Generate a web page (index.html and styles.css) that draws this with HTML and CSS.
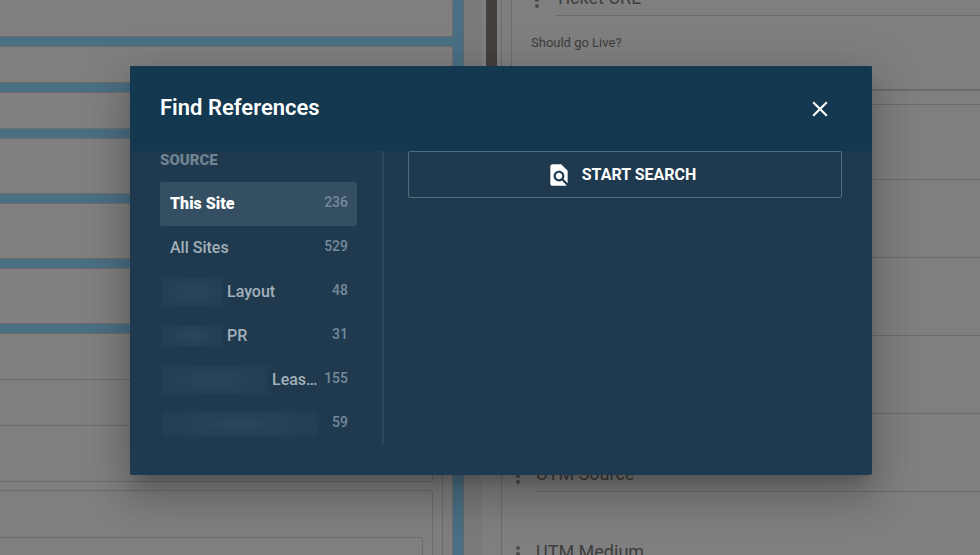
FILE: index.html
```html
<!DOCTYPE html>
<html lang="en">
<head>
<meta charset="utf-8">
<title>Find References</title>
<link rel="stylesheet" href="styles.css">
</head>
<body>
<main class="page">
  <section class="outline">
    <div class="card short"></div>
    <div class="card short"></div>
    <div class="card short"></div>
    <div class="card tall"></div>
    <div class="card tall"></div>
    <div class="card tall"></div>
    <div class="card group">
      <div class="line"></div>
      <div class="line"></div>
      <div class="nest">
        <div class="box box-end"></div>
        <div class="box box-start"><div class="box inner"></div></div>
      </div>
    </div>
  </section>
  <div class="gutter"></div>
  <div class="scrollbar"></div>
  <section class="form">
    <div class="group-top">
      <div class="panel">
        <div class="field-head"><span class="dots"><i></i><i></i><i></i></span><span class="field-name">Ticket URL</span></div>
        <p class="question">Should go Live?</p>
      </div>
    </div>
    <div class="fields">
      <div class="field first"></div>
      <div class="field"></div>
      <div class="field"></div>
      <div class="field"></div>
      <div class="field-row"><span class="dots"><i></i><i></i><i></i></span><span class="field-name">UTM Source</span></div>
      <div class="field-row"><span class="dots"><i></i><i></i><i></i></span><span class="field-name">UTM Medium</span></div>
    </div>
  </section>
</main>
<div class="overlay">
  <div class="dialog" role="dialog" aria-labelledby="dialog-title">
    <header class="dialog-head">
      <h1 id="dialog-title">Find References</h1>
      <button class="close" aria-label="Close"><svg width="26" height="26" viewBox="0 0 24 24"><path fill="#fff" d="M19 6.41 17.59 5 12 10.59 6.41 5 5 6.41 10.59 12 5 17.59 6.41 19 12 13.41 17.59 19 19 17.59 13.41 12z"/></svg></button>
    </header>
    <div class="dialog-body">
      <nav class="sources">
        <h2>SOURCE</h2>
        <button class="source active"><span class="name">This Site</span><span class="count">236</span></button>
        <button class="source"><span class="name">All Sites</span><span class="count">529</span></button>
        <button class="source masked"><span class="mask mask-a"></span><span class="name">Layout</span><span class="count">48</span></button>
        <button class="source masked"><span class="mask mask-b"></span><span class="name">PR</span><span class="count">31</span></button>
        <button class="source masked"><span class="mask mask-c"></span><span class="name">Leas…</span><span class="count">155</span></button>
        <button class="source masked"><span class="mask mask-d"></span><span class="count">59</span></button>
      </nav>
      <div class="results">
        <button class="search"><svg width="26" height="26" viewBox="0 0 24 24"><path fill="#fff" d="M20 19.59V8l-6-6H6c-1.1 0-1.99.9-1.99 2L4 20c0 1.100.89 2 1.990 2H18c.45 0 .85-.15 1.190-.4l-4.430-4.430c-.8.52-1.740.83-2.760.83-2.760 0-5-2.240-5-5s2.240-5 5-5 5 2.240 5 5c0 1.020-.31 1.960-.83 2.750L20 19.590zM9 13c0 1.660 1.340 3 3 3s3-1.340 3-3-1.340-3-3-3-3 1.340-3 3z"/></svg><span>START SEARCH</span></button>
      </div>
    </div>
  </div>
</div>
</body>
</html>
```
FILE: styles.css
```css
* { box-sizing: border-box; }
body { margin: 0; height: 100vh; overflow: hidden; font-family: Roboto, sans-serif; background: #7f7f7f; }
button { font: inherit; color: inherit; border: 0; background: none; padding: 0; }
h1, h2, p { margin: 0; }

.page { display: flex; height: 100vh; overflow: hidden; }
.outline { flex: 0 0 464px; display: flex; flex-direction: column; gap: 9px; padding-right: 10px; background: #4a6f83; border-right: 1px solid #5d6b72; }
.card { flex: none; background: #7f7f7f; border: 1px solid #6d6d6d; border-left: 0; border-radius: 0 2px 2px 0; }
.short { height: 37px; }
.short:first-child { border-top: 0; }
.tall { height: 56px; }
.group { padding-right: 9px; height: 240px; }
.line { height: 46px; border-bottom: 1px solid #6c6c6c; }
.nest { border-right: 1px solid #6c6c6c; padding-right: 9px; }
.box { border: 1px solid #6c6c6c; border-left: 0; border-radius: 0 4px 4px 0; }
.box-end { height: 56px; border-top: 0; margin-bottom: 8px; }
.box-start { height: 100px; padding: 46px 9px 0 0; }
.inner { height: 60px; }
.gutter { flex: 0 0 22px; background: #7a7a7a; border-right: 4px solid #7f7f7f; }
.scrollbar { flex: 0 0 11px; height: 100px; background: #453f3e; }

.form { flex: 1; padding-left: 4px; color: #3d3d3d; }
.group-top { height: 91px; border-left: 1px solid #6c6c6c; border-bottom: 2px solid #6a6a6a; padding-left: 9px; }
.panel { height: 100%; border-left: 1px solid #6c6c6c; padding-left: 19px; }
.field-head { display: flex; align-items: flex-end; gap: 14px; height: 16px; padding-left: 4px; }
.field-name { flex: 1; font-size: 18px; line-height: 20px; padding-bottom: 7px; border-bottom: 1px solid #6c6c6c; }
.dots { display: flex; flex-direction: column; gap: 2px; width: 6px; padding-bottom: 8px; }
.dots i { width: 4px; height: 4px; border-radius: 50%; background: #4b4b4b; }
.question { font-size: 13px; line-height: 20px; padding-top: 17px; }
.fields { margin-top: 13px; border: 1px solid #6c6c6c; border-right: 0; height: 600px; }
.field { height: 78px; border-bottom: 1px solid #6c6c6c; }
.first { height: 75px; }
.field-row { display: flex; align-items: flex-end; gap: 14px; height: 78px; padding-left: 14px; }

.overlay { position: absolute; inset: 0; padding: 66px 108px 80px 130px; }
.dialog { background: #1f3a4e; border-radius: 2px; overflow: hidden; box-shadow: 0 11px 15px -7px rgba(0,0,0,.2), 0 24px 38px 3px rgba(0,0,0,.14), 0 9px 46px 8px rgba(0,0,0,.12); }
.dialog-head { display: flex; justify-content: space-between; align-items: center; height: 85px; padding: 0 39px 0 30px; background: #143850; color: #fff; }
.dialog-head h1 { font-size: 22px; line-height: 28px; font-weight: 600; padding-bottom: 2px; }
.close { height: 26px; }
.dialog-body { display: flex; gap: 24px; padding: 0 30px 30px; }
.sources { flex: 0 0 224px; border-right: 2px solid #2d485b; padding-right: 25px; height: 294px; }
.sources h2 { font-size: 15px; line-height: 18px; font-weight: 900; color: #708391; margin-bottom: 13px; }
.source { display: flex; align-items: center; width: 100%; height: 44px; padding: 0 9px 0 10px; border-radius: 2px; font-size: 16px; font-weight: 500; color: #a3b0b9; text-align: left; }
.name { white-space: nowrap; padding-bottom: 2px; }
.count { margin-left: auto; padding-bottom: 4px; font-size: 14px; font-weight: 500; color: #74899a; }
.active { background: #344f61; }
.active .name { font-weight: 900; color: #fff; }
.masked { padding-left: 2px; }
.mask { height: 30px; margin-right: 4px; background: radial-gradient(#2b465a, #233e52 80%); }
.mask-a { width: 61px; }
.mask-b { width: 61px; height: 22px; }
.mask-c { width: 106px; }
.mask-d { width: 155px; height: 26px; }
.results { flex: 1; }
.search { display: flex; align-items: center; justify-content: center; gap: 10px; width: 100%; height: 47px; padding-right: 8px; border: 1px solid #526b7b; border-radius: 2px; color: #fff; font-size: 16px; font-weight: 700; }
```
